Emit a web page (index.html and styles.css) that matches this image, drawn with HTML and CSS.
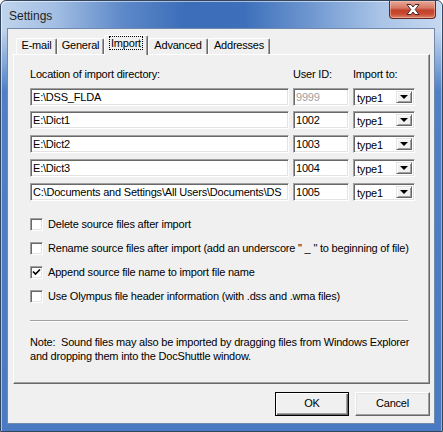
FILE: index.html
```html
<!DOCTYPE html>
<html>
<head>
<meta charset="utf-8">
<title>Settings</title>
<link rel="stylesheet" href="styles.css">
</head>
<body>
<div class="window">
  <div class="titlebar">
    <span class="title">Settings</span>
    <div class="close">
      <svg width="16" height="11" viewBox="0 0 16 11">
        <path d="M2 0.5 H6 L8 3 L10 0.5 H14 L10.2 5.5 L14 10.5 H10 L8 8 L6 10.5 H2 L5.8 5.5 Z" fill="#fff" stroke="#4a2a28" stroke-width="1" stroke-linejoin="round"/>
      </svg>
    </div>
  </div>
  <div class="client">
    <div class="tabs">
      <div class="tab t-email">E-mail</div>
      <div class="tab t-general">General</div>
      <div class="tab t-import active"><span class="focus">Import</span></div>
      <div class="tab t-advanced">Advanced</div>
      <div class="tab t-addresses">Addresses</div>
    </div>
    <div class="panel">
      <div class="dirs">
        <div class="hdr">Location of import directory:</div>
        <div class="hdr">User ID:</div>
        <div class="hdr">Import to:</div>

        <div class="field">E:\DSS_FLDA</div>
        <div class="field disabled">9999</div>
        <div class="combo"><span>type1</span><i class="drop"></i></div>

        <div class="field">E:\Dict1</div>
        <div class="field">1002</div>
        <div class="combo"><span>type1</span><i class="drop"></i></div>

        <div class="field">E:\Dict2</div>
        <div class="field">1003</div>
        <div class="combo"><span>type1</span><i class="drop"></i></div>

        <div class="field">E:\Dict3</div>
        <div class="field">1004</div>
        <div class="combo"><span>type1</span><i class="drop"></i></div>

        <div class="field">C:\Documents and Settings\All Users\Documents\DS</div>
        <div class="field">1005</div>
        <div class="combo"><span>type1</span><i class="drop"></i></div>
      </div>

      <div class="checks">
        <div class="check"><span class="box"></span>Delete source files after import</div>
        <div class="check"><span class="box"></span>Rename source files after import (add an underscore " _ " to beginning of file)</div>
        <div class="check"><span class="box"><svg width="9" height="9" viewBox="0 0 9 9"><path d="M1 3.5 L3.5 6 L8 1.5" fill="none" stroke="#000" stroke-width="1.7"/></svg></span>Append source file name to import file name</div>
        <div class="check"><span class="box"></span>Use Olympus file header information (with .dss and .wma files)</div>
      </div>

      <div class="sep"></div>

      <p class="note">Note:&nbsp; Sound files may also be imported by dragging files from Windows Explorer<br>and dropping them into the DocShuttle window.</p>
    </div>
    <div class="buttons">
      <div class="btn default">OK</div>
      <div class="btn">Cancel</div>
    </div>
  </div>
</div>
</body>
</html>
```

FILE: styles.css
```css
html, body {
  margin: 0;
  padding: 0;
  background: #fff;
}

body {
  font-family: "Liberation Sans", Arial, sans-serif;
  font-size: 11px;
  letter-spacing: -0.2px;
  color: #000;
}

/* Window frame with glass-like title bar */
.window {
  box-sizing: border-box;
  width: 443px;
  height: 432px;
  border: 1px solid #34465e;
  border-radius: 6px 6px 0 0;
  padding: 0 7px 7px 6px;
  display: flex;
  flex-direction: column;
  background:
    linear-gradient(to bottom, rgba(79, 128, 198, 0) 0, rgba(79, 128, 198, 0) 30px, #4f80c6 90px, #4a7bc2 100%),
    linear-gradient(90deg, #c0d4ec 0%, #a3bfe4 12%, #5c88c8 28%, #3b6db9 42%, #3d6fba 55%, #6e97d0 70%, #a9c4e7 86%, #c6d8ef 100%);
  box-shadow: inset 1px 1px 0 rgba(255, 255, 255, 0.55), inset -1px 0 0 rgba(255, 255, 255, 0.4);
}

.titlebar {
  height: 27px;
  display: flex;
  align-items: flex-start;
}

.title {
  font-family: "Liberation Sans", Arial, sans-serif;
  font-size: 12px;
  letter-spacing: 0;
  color: #1e1e1e;
  margin: 8px 0 0 2px;
}

.close {
  margin-left: auto;
  margin-right: -1px;
  width: 47px;
  height: 18px;
  box-sizing: border-box;
  border: 1px solid #5e2a22;
  border-top: none;
  border-radius: 0 0 4px 4px;
  background: linear-gradient(to bottom, #e7a897 0%, #d67a64 40%, #c2412a 55%, #c84a30 75%, #dc826a 100%);
  box-shadow: inset 0 0 0 1px rgba(255, 210, 200, 0.45);
  display: flex;
  align-items: center;
  justify-content: center;
}

/* Dialog client area */
.client {
  flex: 1;
  background: #f0f0f0;
  border: 1px solid #7189ab;
  padding: 6px 4px 0 5px;
  display: flex;
  flex-direction: column;
}

.tabs {
  display: flex;
  align-items: flex-end;
  height: 19px;
  margin-left: 3px;
}

.tab {
  box-sizing: border-box;
  height: 16px;
  line-height: 13px;
  text-align: center;
  background: #f0f0f0;
  border-top: 1px solid #fff;
  border-left: 1px solid #fff;
  border-right: 1px solid #696969;
  box-shadow: inset -1px 0 0 #a0a0a0;
  border-radius: 2px 2px 0 0;
}

.t-email { width: 41px; }
.t-general { width: 47px; }
.t-import { width: 44px; }
.t-advanced { width: 60px; }
.t-addresses { width: 62px; }

.tab.active {
  height: 20px;
  margin-bottom: -1px;
  position: relative;
  z-index: 1;
  padding-top: 1px;
  line-height: 13px;
}

.focus {
  outline: 1px dotted #000;
  padding: 0 1px;
}

.panel {
  box-sizing: border-box;
  width: 417px;
  height: 330px;
  border: 1px solid;
  border-color: #fff #696969 #696969 #fff;
  box-shadow: inset -1px -1px 0 #a0a0a0;
  padding: 13px 0 0 16px;
}

.dirs {
  display: grid;
  grid-template-columns: 259px 56px 62px;
  grid-template-rows: 13px;
  grid-auto-rows: 18px;
  column-gap: 4px;
  row-gap: 6px;
}

.hdr {
  line-height: 13px;
  white-space: nowrap;
}

/* first field row sits 7px below the header line */
.dirs > .hdr + .hdr + .hdr + .field,
.dirs > .hdr + .hdr + .hdr + .field + .field,
.dirs > .hdr + .hdr + .hdr + .field + .field + .combo {
  margin-top: 1px;
}

.field,
.combo,
.box {
  box-sizing: border-box;
  background: #fff;
  border: 1px solid;
  border-color: #a0a0a0 #fff #fff #a0a0a0;
  box-shadow: inset 1px 1px 0 #696969, inset -1px -1px 0 #e3e3e3;
}

.field {
  height: 18px;
  line-height: 15px;
  padding: 1px 0 0 2px;
  overflow: hidden;
  white-space: nowrap;
}

.field.disabled {
  color: #a0a0a0;
}

.combo {
  height: 18px;
  display: flex;
  align-items: stretch;
  padding: 2px;
}

.combo span {
  flex: 1;
  line-height: 15px;
  padding-left: 1px;
}

.drop {
  width: 16px;
  box-sizing: border-box;
  background: #f0f0f0;
  border: 1px solid;
  border-color: #e3e3e3 #696969 #696969 #e3e3e3;
  box-shadow: inset 1px 1px 0 #fff, inset -1px -1px 0 #a0a0a0;
  display: flex;
  align-items: center;
  justify-content: center;
}

.drop::after {
  content: "";
  width: 0;
  height: 0;
  border-left: 4px solid transparent;
  border-right: 4px solid transparent;
  border-top: 4px solid #000;
}

.checks {
  margin-top: 11px;
  display: flex;
  flex-direction: column;
}

.check {
  height: 24px;
  display: flex;
  align-items: center;
  white-space: nowrap;
}

.box {
  width: 13px;
  height: 13px;
  margin-right: 5px;
  display: flex;
  align-items: center;
  justify-content: center;
}

.sep {
  width: 378px;
  height: 1px;
  margin-top: 12px;
  background: #a0a0a0;
  border-bottom: 1px solid #fff;
}

.note {
  margin: 13px 0 0;
  line-height: 14px;
}

.buttons {
  display: flex;
  justify-content: flex-end;
  gap: 6px;
  margin-top: 8px;
  width: 417px;
}

.btn {
  box-sizing: border-box;
  width: 75px;
  height: 24px;
  line-height: 20px;
  text-align: center;
  background: #f0f0f0;
  border: 1px solid;
  border-color: #fff #696969 #696969 #fff;
  box-shadow: inset -1px -1px 0 #a0a0a0, inset 1px 1px 0 #e3e3e3;
}

.btn.default {
  width: 74px;
  border-color: #000;
  box-shadow: inset 1px 1px 0 #fff, inset -1px -1px 0 #696969, inset -2px -2px 0 #a0a0a0;
}
```
